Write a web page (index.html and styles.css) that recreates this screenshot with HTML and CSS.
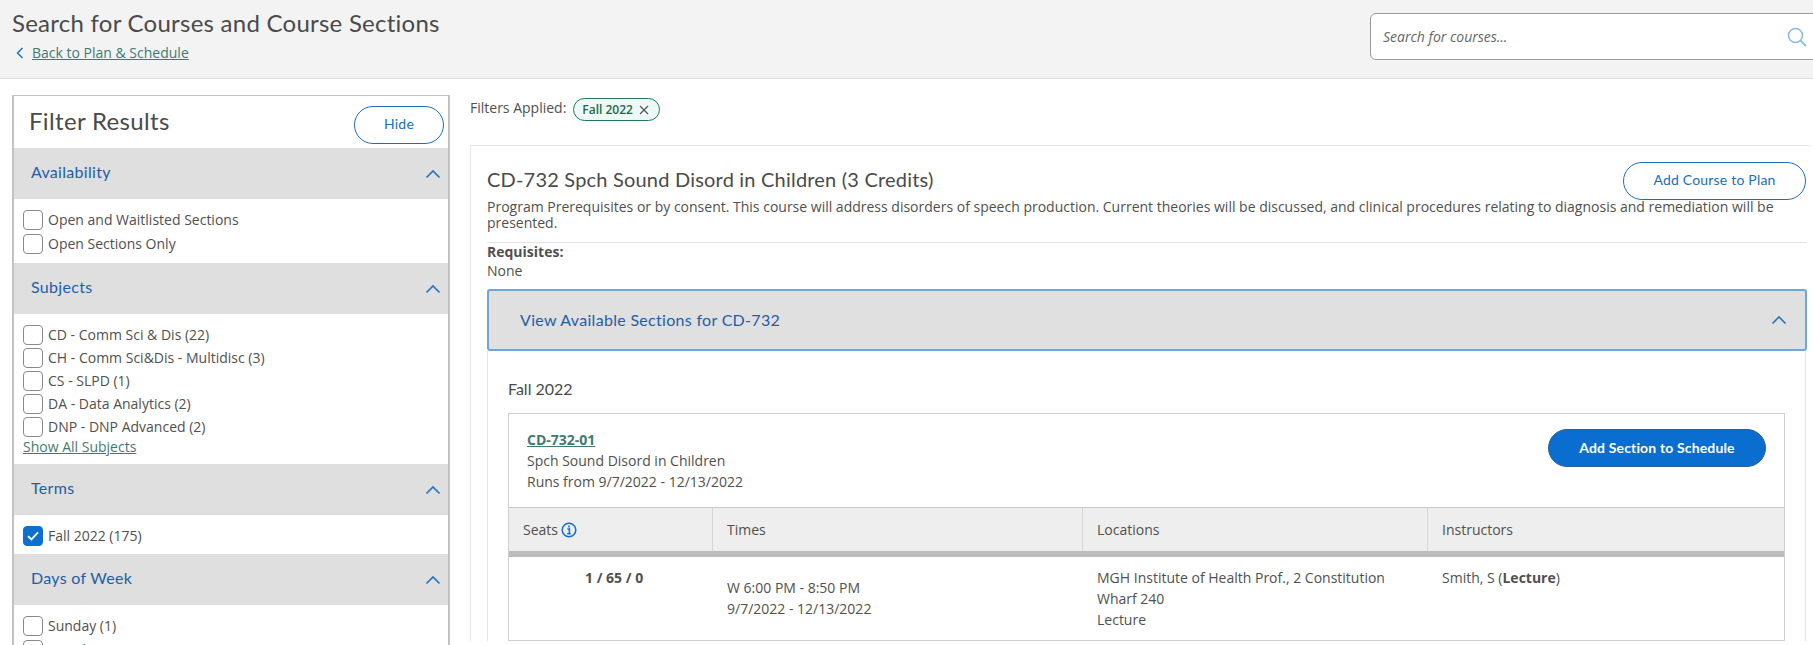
FILE: index.html
```html
<!DOCTYPE html>
<html lang="en">
<head>
<meta charset="utf-8">
<title>Search for Courses and Course Sections</title>
<link rel="stylesheet" href="styles.css">
</head>
<body>
<div class="page">
  <header class="top">
    <div class="top-left">
      <h1 class="page-title">Search for Courses and Course Sections</h1>
      <div class="back">
        <svg class="back-icon" viewBox="0 0 8 12" width="8" height="12"><path d="M6.5 1 1.5 6l5 5" fill="none" stroke="#1b74c5" stroke-width="1.5"/></svg>
        <a href="#" class="link">Back to Plan &amp; Schedule</a>
      </div>
    </div>
    <div class="search">
      <span class="search-text">Search for courses...</span>
      <svg class="search-icon" viewBox="0 0 20 20" width="20" height="20"><circle cx="8.5" cy="8.5" r="7" fill="none" stroke="#8db9e6" stroke-width="1.6"/><path d="m13.6 13.6 5.4 5.4" stroke="#8db9e6" stroke-width="1.8" fill="none"/></svg>
    </div>
  </header>

  <div class="columns">
    <aside class="filters">
      <div class="filters-head">
        <h2 class="filters-title">Filter Results</h2>
        <button class="btn btn-hide">Hide</button>
      </div>

      <div class="group-bar"><span>Availability</span><svg class="chev" viewBox="0 0 16 10" width="16" height="10"><path d="M1.5 8.5 8 2l6.5 6.5" fill="none" stroke="#2a74bd" stroke-width="1.7"/></svg></div>
      <div class="group-body">
        <label class="check"><span class="box"></span>Open and Waitlisted Sections</label>
        <label class="check"><span class="box"></span>Open Sections Only</label>
      </div>

      <div class="group-bar"><span>Subjects</span><svg class="chev" viewBox="0 0 16 10" width="16" height="10"><path d="M1.5 8.5 8 2l6.5 6.5" fill="none" stroke="#2a74bd" stroke-width="1.7"/></svg></div>
      <div class="group-body group-subjects">
        <label class="check"><span class="box"></span>CD - Comm Sci &amp; Dis (22)</label>
        <label class="check"><span class="box"></span>CH - Comm Sci&amp;Dis - Multidisc (3)</label>
        <label class="check"><span class="box"></span>CS - SLPD (1)</label>
        <label class="check"><span class="box"></span>DA - Data Analytics (2)</label>
        <label class="check"><span class="box"></span>DNP - DNP Advanced (2)</label>
        <a href="#" class="link show-all">Show All Subjects</a>
      </div>

      <div class="group-bar"><span>Terms</span><svg class="chev" viewBox="0 0 16 10" width="16" height="10"><path d="M1.5 8.5 8 2l6.5 6.5" fill="none" stroke="#2a74bd" stroke-width="1.7"/></svg></div>
      <div class="group-body group-terms">
        <label class="check"><span class="box box-on"><svg viewBox="0 0 12 10" width="12" height="10"><path d="M1 5.2 4.4 8.4 11 1.4" fill="none" stroke="#fff" stroke-width="1.8"/></svg></span>Fall 2022 (175)</label>
      </div>

      <div class="group-bar"><span>Days of Week</span><svg class="chev" viewBox="0 0 16 10" width="16" height="10"><path d="M1.5 8.5 8 2l6.5 6.5" fill="none" stroke="#2a74bd" stroke-width="1.7"/></svg></div>
      <div class="group-body">
        <label class="check"><span class="box"></span>Sunday (1)</label>
        <label class="check"><span class="box"></span>Monday (17)</label>
      </div>
    </aside>

    <main class="results">
      <div class="applied">
        <span>Filters Applied:</span>
        <span class="chip">Fall 2022
          <svg viewBox="0 0 10 10" width="10" height="10"><path d="m1 1 8 8M9 1 1 9" stroke="#555" stroke-width="1.2" fill="none"/></svg>
        </span>
      </div>

      <section class="card">
        <div class="course-head">
          <h2 class="course-title">CD-732 Spch Sound Disord in Children (3 Credits)</h2>
          <button class="btn btn-plan">Add Course to Plan</button>
        </div>
        <p class="course-desc">Program Prerequisites or by consent. This course will address disorders of speech production. Current theories will be discussed, and clinical procedures relating to diagnosis and remediation will be presented.</p>
        <div class="reqs">
          <strong>Requisites:</strong>
          <div>None</div>
        </div>

        <div class="sections-bar"><span>View Available Sections for CD-732</span><svg class="chev" viewBox="0 0 16 10" width="16" height="10"><path d="M1.5 8.5 8 2l6.5 6.5" fill="none" stroke="#2a74bd" stroke-width="1.7"/></svg></div>

        <div class="sections-body">
          <h3 class="term">Fall 2022</h3>
          <div class="section-box">
            <div class="section-head">
              <div class="section-info">
                <a href="#" class="link section-code">CD-732-01</a>
                <div>Spch Sound Disord in Children</div>
                <div>Runs from 9/7/2022 - 12/13/2022</div>
              </div>
              <button class="btn-add">Add Section to Schedule</button>
            </div>
            <div class="table-row table-header">
              <div class="cell">Seats
                <svg class="info" viewBox="0 0 16 16" width="16" height="16"><circle cx="8" cy="8" r="6.8" fill="none" stroke="#0d6fd0" stroke-width="1.5"/><path d="M8 3.6v1.9M6.4 7h2v4.6M6.2 11.8h3.6" fill="none" stroke="#0d6fd0" stroke-width="1.5"/></svg>
              </div>
              <div class="cell">Times</div>
              <div class="cell">Locations</div>
              <div class="cell">Instructors</div>
            </div>
            <div class="table-row table-data">
              <div class="cell cell-seats"><strong>1 / 65 / 0</strong></div>
              <div class="cell cell-times"><div>W 6:00 PM - 8:50 PM</div><div>9/7/2022 - 12/13/2022</div></div>
              <div class="cell"><div>MGH Institute of Health Prof., 2 Constitution</div><div>Wharf 240</div><div>Lecture</div></div>
              <div class="cell">Smith, S (<strong>Lecture</strong>)</div>
            </div>
          </div>
        </div>
      </section>
    </main>
  </div>
</div>
</body>
</html>
```

FILE: styles.css
```css
* { box-sizing: border-box; }
html, body { margin: 0; height: 645px; overflow: hidden; background: #fff; }
body { font-family: "Open Sans", "Liberation Sans", sans-serif; font-size: 14px; color: #505050; }
.page { width: 1830px; }
h1, h2, h3, p { margin: 0; font-weight: 400; }
.link { color: #3f7a73; text-decoration: underline; }

.top { height: 79px; background: #f3f3f3; border-bottom: 1px solid #dedede; display: flex; justify-content: space-between; padding: 9px 5px 0 12px; }
.page-title { font-family: Lato, "Noto Sans", sans-serif; font-size: 24px; line-height: 27px; color: #4a4a4a; letter-spacing: 0.25px; }
.back { display: flex; align-items: center; gap: 8px; margin-top: 7px; padding-left: 4px; line-height: 20px; }
.search { width: 455px; height: 47px; margin-top: 4px; background: #fff; border: 1px solid #9a9a9a; border-radius: 6px; display: flex; align-items: center; justify-content: space-between; padding: 0 17px 0 12px; }
.search-text { font-style: italic; color: #666; }

.columns { display: flex; align-items: flex-start; padding: 16px 0 0 12px; }
.filters { width: 438px; flex: none; border: 1px solid #c2c2c2; border-width: 1px 2px; padding-bottom: 10px; }
.filters-head { height: 52px; display: flex; justify-content: space-between; padding: 10px 4px 0 16px; margin-left: -1px; }
.filters-title { font-family: Lato, "Noto Sans", sans-serif; font-size: 24px; line-height: 28px; padding-top: 1px; color: #4a4a4a; letter-spacing: 0.35px; }
.btn { font-family: Lato, "Noto Sans", sans-serif; font-size: 14px; letter-spacing: 0.2px; background: #fff; color: #1a6ec0; border: 1px solid #1a6ec0; border-radius: 19px; height: 38px; padding: 0 0 3px; }
.btn-hide { width: 90px; }
.btn-plan { width: 183px; flex: none; }

.group-bar { height: 51px; background: #dfdfdf; display: flex; align-items: center; justify-content: space-between; padding: 0 7px 0 17px; font-family: Lato, "Noto Sans", sans-serif; font-size: 16px; letter-spacing: 0.3px; color: #1d5ea8; }
.group-bar span { position: relative; top: -2px; }
.group-body { padding: 11px 9px 9px; display: flex; flex-direction: column; gap: 4px; }
.group-subjects { padding-top: 11px; padding-bottom: 7px; gap: 3px; }
.group-terms { padding-top: 11px; padding-bottom: 8px; }
.check { display: flex; align-items: center; gap: 5px; height: 20px; line-height: 20px; }
.box { width: 20px; height: 20px; flex: none; border: 1px solid #8a8a8a; border-radius: 4px; background: #fff; display: flex; align-items: center; justify-content: center; }
.box-on { background: #0d6fd0; border-color: #0d6fd0; }
.show-all { line-height: 20px; margin-top: -3px; }

.results { width: 1360px; flex: none; padding: 0 0 0 20px; }
.applied { height: 50px; display: flex; align-items: flex-start; gap: 7px; padding-top: 3px; line-height: 20px; }
.chip { height: 23px; width: 87px; display: flex; align-items: center; justify-content: space-between; padding: 0 10px 0 8px; border: 1px solid #1f7a58; border-radius: 12px; background: #eef8f4; color: #1c6a4c; font-size: 12px; font-weight: 600; white-space: nowrap; }

.card { border-top: 1px solid #e6e6e6; border-left: 1px solid #e6e6e6; padding: 16px 0 0 16px; }
.course-head { display: flex; justify-content: space-between; height: 38px; width: 1319px; }
.course-title { font-family: Lato, "Noto Sans", sans-serif; font-size: 20px; line-height: 27px; padding-top: 4px; color: #4a4a4a; letter-spacing: 0.2px; }
.course-desc { width: 1320px; line-height: 16px; padding-right: 30px; height: 44px; border-bottom: 1px solid #e3e3e3; margin-top: -1px; }
.reqs { line-height: 19px; height: 47px; margin-top: -1px; }
.sections-bar { width: 1320px; height: 62px; background: #e0e0e0; border: 2px solid #6da5dd; border-radius: 3px; display: flex; align-items: center; justify-content: space-between; padding: 0 18px 0 31px; font-family: Lato, "Noto Sans", sans-serif; font-size: 16px; letter-spacing: 0.3px; color: #1d5ea8; }
.sections-bar span { position: relative; top: -1px; }
.sections-body { width: 1319px; border-left: 1px solid #e3e3e3; border-right: 1px solid #e3e3e3; padding: 27px 20px 0 20px; }
.term { font-family: Lato, "Noto Sans", sans-serif; font-size: 16px; line-height: 22px; color: #4a4a4a; }
.section-box { margin-top: 13px; border: 1px solid #cfcfcf; }
.section-head { height: 93px; display: flex; justify-content: space-between; padding: 15px 18px 0 18px; }
.section-info { line-height: 21px; }
.section-code { font-weight: 700; display: block; }
.btn-add { font-family: Lato, "Noto Sans", sans-serif; font-size: 14px; font-weight: 700; letter-spacing: 0.15px; color: #fff; background: #0a6ed1; border: 1px solid #2c5f90; border-radius: 19px; width: 218px; height: 38px; padding: 0 0 2px; }

.table-row { display: grid; grid-template-columns: 203px 370px 345px 1fr; }
.table-header { height: 50px; background: #eeeeee; border-top: 1px solid #c9c9c9; border-bottom: 6px solid #bcbcbc; }
.table-header .cell { display: flex; align-items: center; gap: 3px; padding-left: 14px; border-left: 1px solid #d5d5d5; }
.table-header .cell:first-child { border-left: 0; }
.table-data { height: 83px; }
.table-data .cell { padding: 10px 0 0 15px; line-height: 21px; }
.table-data .cell-seats { padding-left: 76px; }
.table-data .cell-times { padding-top: 20px; }
```
